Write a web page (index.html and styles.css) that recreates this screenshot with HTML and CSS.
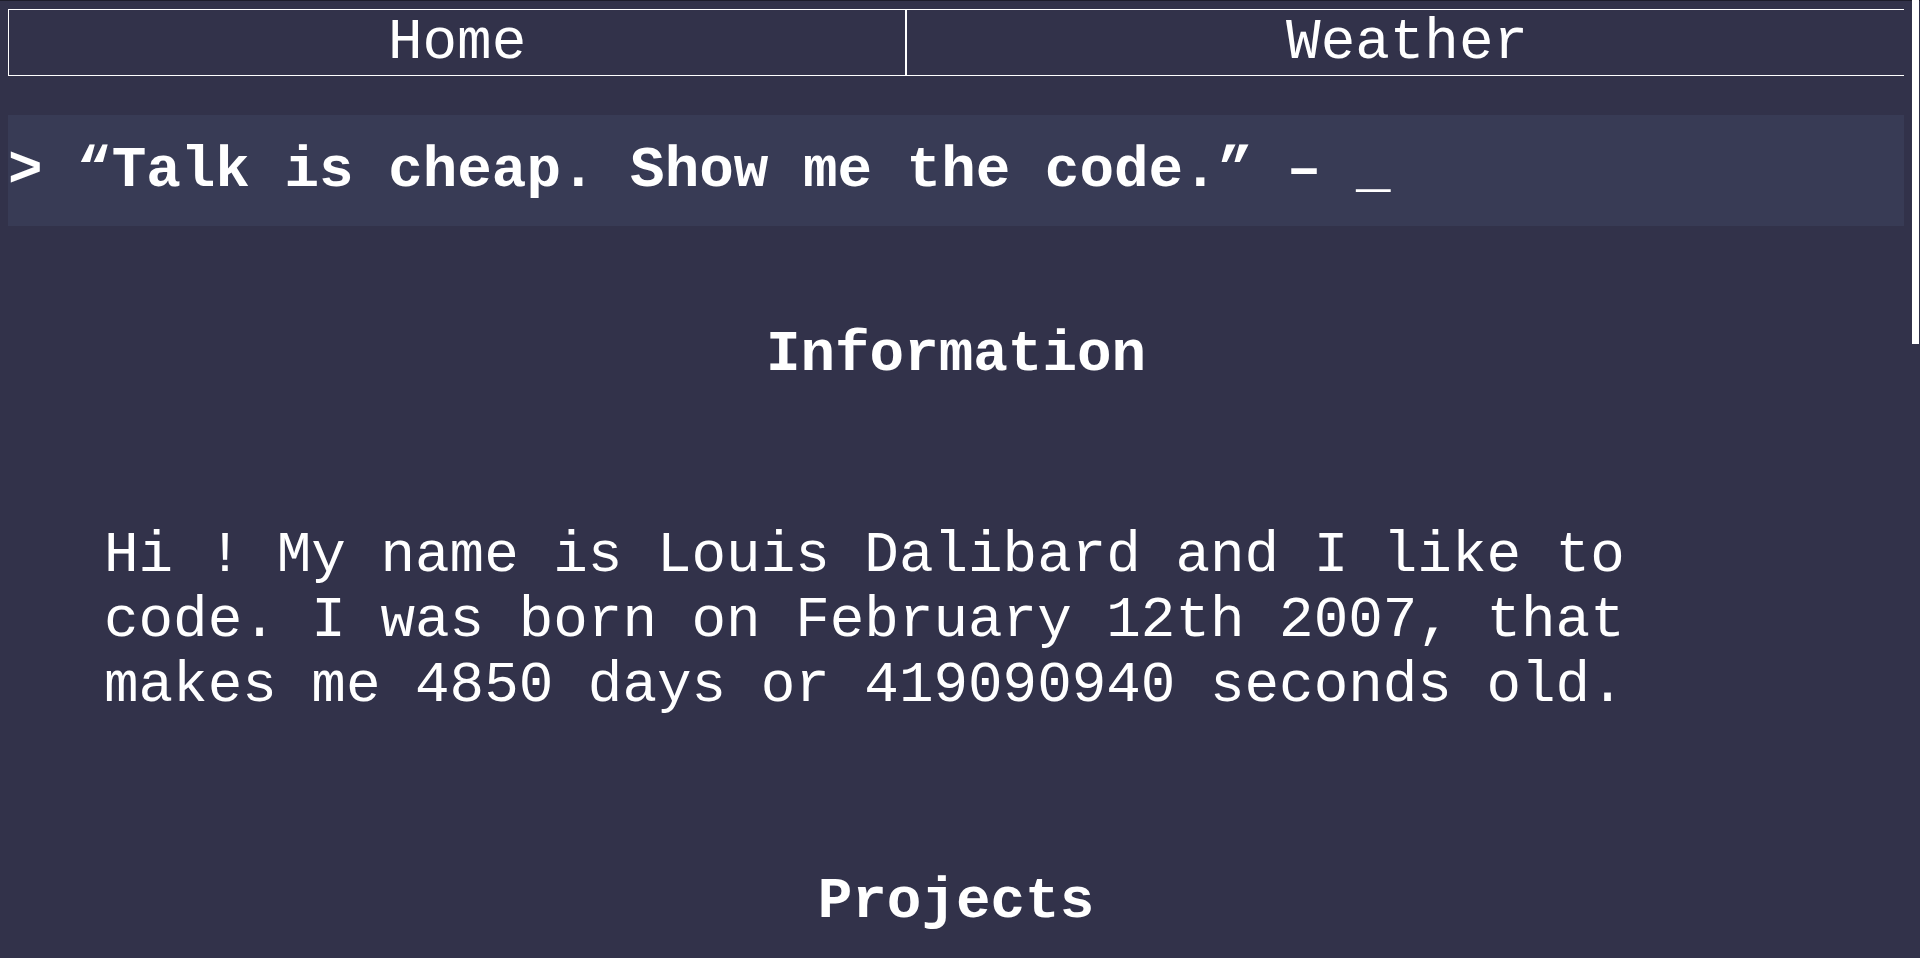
FILE: index.html
```html
<!DOCTYPE html>
<html lang="en">
<head>
<meta charset="utf-8">
<title>Louis Dalibard</title>
<link rel="stylesheet" href="styles.css">
</head>
<body>
<nav class="tabs">
  <a class="tab" href="#">Home</a>
  <a class="tab" href="#">Weather</a>
</nav>
<div class="quote">&gt; “Talk is cheap. Show me the code.” – <span class="cursor">_</span></div>
<section class="block">
  <h2 class="block-title">Information</h2>
  <p class="block-text">Hi ! My name is Louis Dalibard and I like to code. I was born on February 12th 2007, that makes me 4850 days or 419090940 seconds old.</p>
</section>
<section class="block projects">
  <h2 class="block-title">Projects</h2>
</section>
<div class="scroll-thumb" aria-hidden="true"></div>
</body>
</html>
```
FILE: styles.css
```css
html {
  background: #32324a;
  border-top: 1px solid #1d1d2b;
}
body {
  margin: 8px 16px 8px 8px;
  color: #ffffff;
  font-family: "Courier New", "Liberation Mono", monospace;
  font-size: 57.6px;
}
.tabs {
  display: flex;
  width: calc(100% + 4px);
  box-sizing: border-box;
}
.tab {
  flex: 1 1 auto;
  border: 1px solid #ffffff;
  color: #ffffff;
  text-decoration: none;
  text-align: center;
  line-height: 65px;
}
.quote {
  margin-top: 39px;
  padding: 23px 0;
  background: #383b55;
  font-weight: bold;
  line-height: 65px;
  white-space: pre;
}
.block {
  text-align: center;
}
.block-title {
  margin: 96px 0 0;
  font-size: 57.6px;
  font-weight: bold;
  line-height: 65px;
}
.block-text {
  margin: 136px 0 0;
  padding: 0 96px;
  text-align: left;
  line-height: 65px;
  max-width: 1560px;
}
.projects .block-title {
  margin-top: 151px;
}
.projects {
  min-height: 1700px;
}
.scroll-thumb {
  position: fixed;
  top: 0;
  right: 1px;
  width: 7px;
  height: 344px;
  background: #ffffff;
}
```
